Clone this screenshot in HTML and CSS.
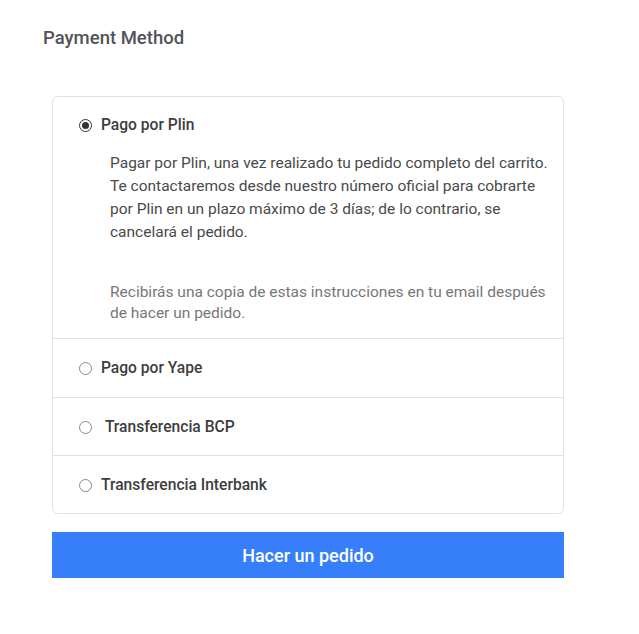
FILE: index.html
```html
<!DOCTYPE html>
<html lang="es">
<head>
<meta charset="utf-8">
<title>Payment Method</title>
<link rel="stylesheet" href="styles.css">
</head>
<body>
<div class="page">
  <h2 class="title">Payment Method</h2>
  <div class="methods">
    <ul class="card">
      <li class="option">
        <label class="option-label"><span class="radio checked"></span><span class="name">Pago por Plin</span></label>
        <div class="desc">
          <p class="desc-main">Pagar por Plin, una vez realizado tu pedido completo del carrito.<br>Te contactaremos desde nuestro número oficial para cobrarte<br>por Plin en un plazo máximo de 3 días; de lo contrario, se<br>cancelará el pedido.</p>
          <p class="desc-note">Recibirás una copia de estas instrucciones en tu email después<br>de hacer un pedido.</p>
        </div>
      </li>
      <li class="option">
        <label class="option-label"><span class="radio"></span><span class="name">Pago por Yape</span></label>
      </li>
      <li class="option">
        <label class="option-label"><span class="radio"></span><span class="name">&nbsp;Transferencia BCP</span></label>
      </li>
      <li class="option">
        <label class="option-label"><span class="radio"></span><span class="name">Transferencia Interbank</span></label>
      </li>
    </ul>
    <button class="submit" type="button">Hacer un pedido</button>
  </div>
</div>
</body>
</html>
```
FILE: styles.css
```css
* { box-sizing: border-box; }
html, body { margin: 0; padding: 0; background: #fff; }
body { font-family: Roboto, "Liberation Sans", Arial, sans-serif; color: #3c3c3c; }
.page { padding: 27px 0 0 43px; }
.title {
  margin: 0;
  font-size: 18.5px;
  font-weight: 500;
  line-height: 22px;
  color: #505358;
}
.methods { margin: 47px 0 0 9px; width: 512px; }
.card {
  list-style: none;
  margin: 0;
  padding: 0;
  border: 1px solid #e2e2e2;
  border-radius: 6px;
}
.option { border-top: 1px solid #e2e2e2; padding: 20px 8px 19px 26px; }
.option:first-child { border-top: none; padding-top: 19px; padding-bottom: 14px; }
.option:nth-child(2) { padding-bottom: 20px; }
.option-label { display: flex; align-items: center; gap: 9px; height: 18px; }
.radio {
  width: 13px; height: 13px; flex: none;
  border: 1px solid #8a8a8a;
  border-radius: 50%;
  display: flex; align-items: center; justify-content: center;
}
.radio.checked { border: 1.5px solid #333; }
.radio.checked::after {
  content: ""; width: 7px; height: 7px; border-radius: 50%; background: #333;
}
.name { font-size: 15.6px; font-weight: 500; color: #3d3d3d; }
.desc { padding: 18px 0 0 31px; }
.desc p { margin: 0; white-space: nowrap; }
.desc-main { font-size: 15.5px; line-height: 23px; color: #4a4a4a; }
.desc-note { margin-top: 38px !important; font-size: 15.5px; line-height: 21px; color: #777; }
.submit {
  display: block;
  width: 100%;
  height: 46px;
  margin-top: 18px;
  border: none;
  background: #377ffa;
  color: #fff;
  font-family: Roboto, "Liberation Sans", Arial, sans-serif;
  font-size: 18px;
  font-weight: 500;
}
```
